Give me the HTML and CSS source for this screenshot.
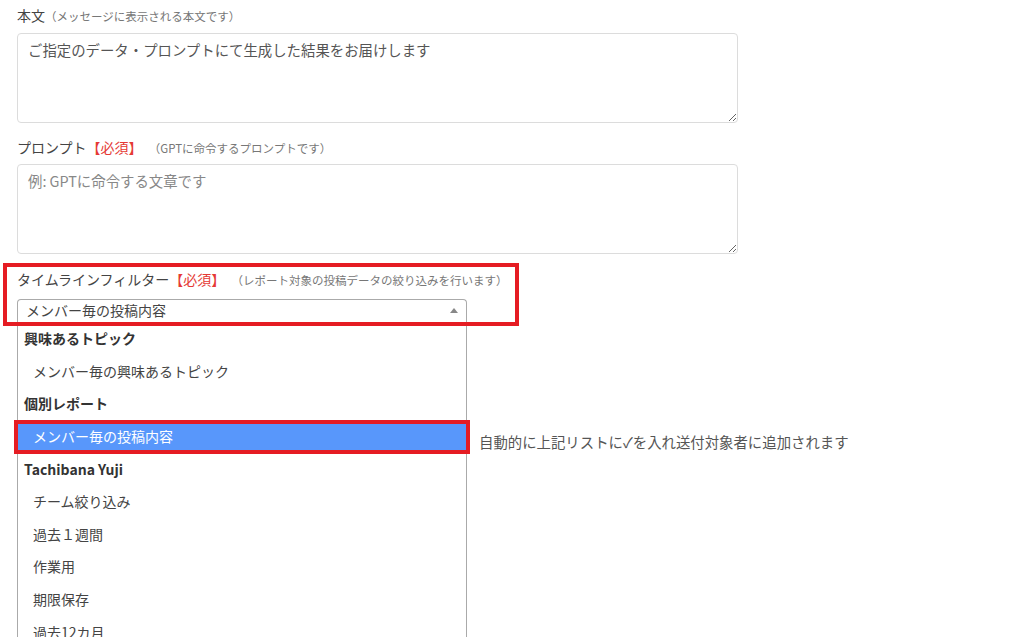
FILE: index.html
```html
<!DOCTYPE html>
<html lang="ja">
<head>
	<meta charset="UTF-8">
	<meta name="viewport" content="width=device-width, initial-scale=1.0">
	<title>レポート設定</title>
	<link rel="stylesheet" href="styles.css">
</head>
<body>
	<div class="page">
		<form class="report-form">
			<div class="field">
				<label class="field-label" for="body">本文<span class="note">（メッセージに表示される本文です）</span></label>
				<textarea id="body" class="text-input">ご指定のデータ・プロンプトにて生成した結果をお届けします</textarea>
			</div>
			<div class="field">
				<label class="field-label" for="prompt">プロンプト<span class="required">【必須】</span><span class="note">（GPTに命令するプロンプトです）</span></label>
				<textarea id="prompt" class="text-input" placeholder="例: GPTに命令する文章です"></textarea>
			</div>
			<div class="field field-filter">
				<div class="mark mark-field"></div>
				<label class="field-label">タイムラインフィルター<span class="required">【必須】</span><span class="note">（レポート対象の投稿データの絞り込みを行います）</span></label>
				<div class="select-wrap">
					<div class="select-box">
						<span class="select-value">メンバー毎の投稿内容</span>
						<span class="select-arrow"></span>
					</div>
					<ul class="dropdown">
						<li class="group-title">興味あるトピック</li>
						<li class="option">メンバー毎の興味あるトピック</li>
						<li class="group-title">個別レポート</li>
						<li class="option selected">メンバー毎の投稿内容<div class="mark mark-option"></div></li>
						<li class="group-title">Tachibana Yuji</li>
						<li class="option">チーム絞り込み</li>
						<li class="option">過去１週間</li>
						<li class="option">作業用</li>
						<li class="option">期限保存</li>
						<li class="option">過去12カ月</li>
						<li class="option">過去30日</li>
					</ul>
				</div>
				<p class="hint">自動的に上記リストに✓を入れ送付対象者に追加されます</p>
			</div>
		</form>
	</div>
</body>
</html>
```

FILE: styles.css
```css
body {
	font-family: "Noto Sans CJK JP", "Noto Sans", sans-serif;
	font-size: 14px;
	line-height: 21.6px;
	color: #444;
	margin: 0;
	padding: 0;
	background-color: #fff;
}
.page {
	height: 637px;
	overflow: hidden;
}
.report-form {
	padding: 5px 0 0 17px;
	width: 721px;
}
.field {
	margin-bottom: 14px;
}
.field-label {
	display: block;
	height: 21.6px;
	color: #444;
	margin-bottom: 6px;
}
.note {
	font-size: 11.5px;
	line-height: 1;
	color: #777;
}
.required {
	color: #e53935;
	margin-right: 12px;
}
.text-input {
	display: block;
	box-sizing: border-box;
	width: 721px;
	height: 90px;
	padding: 5px 10px;
	border: 1px solid #dcdcdc;
	border-radius: 4px;
	font-family: inherit;
	font-size: 14.4px;
	line-height: 21.6px;
	color: #555;
	margin: 0;
}
.text-input::placeholder {
	color: #888;
}

/* timeline filter with open dropdown */
.field-filter {
	position: relative;
	margin-top: 15px;
}
.field-filter .field-label {
	margin-bottom: 8px;
}
.select-wrap {
	position: relative;
	width: 450px;
}
.select-box {
	box-sizing: border-box;
	width: 450px;
	height: 24px;
	border: 1px solid #aaa;
	border-bottom-color: #ddd;
	border-radius: 4px 4px 0 0;
	padding: 0 8px;
	display: flex;
	align-items: center;
	justify-content: space-between;
	color: #444;
}
.select-arrow {
	width: 0;
	height: 0;
	border-left: 4px solid transparent;
	border-right: 4px solid transparent;
	border-bottom: 5px solid #888;
}
.dropdown {
	position: absolute;
	top: 100%;
	left: 0;
	z-index: 5;
	box-sizing: border-box;
	width: 450px;
	list-style: none;
	margin: 0;
	padding: 0;
	background-color: #fff;
	border: 1px solid #aaa;
	border-top: none;
}
.dropdown li {
	position: relative;
	line-height: 21.6px;
	padding: 5.5px 6px;
}
.dropdown .group-title {
	font-weight: bold;
	color: #333;
}
.dropdown .option {
	padding-left: 15px;
}
.dropdown .selected {
	background-color: #5897fb;
	color: #fff;
}
.hint {
	margin: 108px 0 0 462px;
	font-size: 14.4px;
	color: #555;
	white-space: nowrap;
}

/* red annotation frames */
.mark {
	position: absolute;
	z-index: 10;
	border: 4px solid #e51c23;
	box-sizing: border-box;
}
.mark-field {
	top: -6px;
	left: -14px;
	width: 516px;
	height: 63px;
}
.mark-option {
	top: -1px;
	left: -4px;
	right: -4px;
	bottom: -1px;
}
```
